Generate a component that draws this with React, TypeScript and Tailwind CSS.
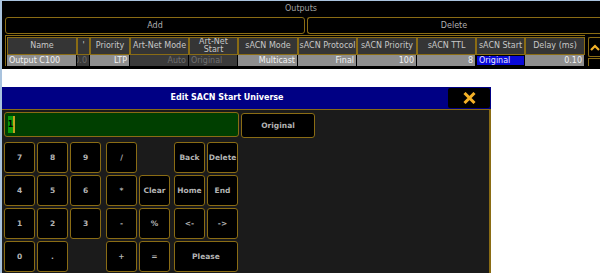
import React from "react";

const GOLD = "border-[#8a6c14]";

const cols = [
  { h: "Name", w: 70, v: "Output C100", align: "left", bg: "bg-[#8e8e8e]", tc: "text-[#f2f2f2]" },
  { h: "-", w: 13, v: "0.0", align: "right", bg: "bg-[#3a3a3a]", tc: "text-[#6a6a6a]" },
  { h: "Priority", w: 40, v: "LTP", align: "right", bg: "bg-[#8e8e8e]", tc: "text-[#f2f2f2]" },
  { h: "Art-Net Mode", w: 59, v: "Auto", align: "right", bg: "bg-[#3a3a3a]", tc: "text-[#707070]" },
  { h: "Art-Net Start", w: 49, v: "Original", align: "left", bg: "bg-[#3a3a3a]", tc: "text-[#707070]", two: true },
  { h: "sACN Mode", w: 60, v: "Multicast", align: "right", bg: "bg-[#8e8e8e]", tc: "text-[#f2f2f2]" },
  { h: "sACN Protocol", w: 59, v: "Final", align: "right", bg: "bg-[#8e8e8e]", tc: "text-[#f2f2f2]" },
  { h: "sACN Priority", w: 60, v: "100", align: "right", bg: "bg-[#8e8e8e]", tc: "text-[#f2f2f2]" },
  { h: "sACN TTL", w: 59, v: "8", align: "right", bg: "bg-[#8e8e8e]", tc: "text-[#f2f2f2]" },
  { h: "sACN Start", w: 49, v: "Original", align: "left", bg: "bg-[#1010e8]", tc: "text-[#e8e8ff]", sel: true },
  { h: "Delay (ms)", w: 60, v: "0.10", align: "right", bg: "bg-[#8e8e8e]", tc: "text-[#f2f2f2]" },
];

function Key({ label, w = 31 }: { label?: string; w?: number }) {
  if (label === undefined) return <div style={{ width: w }} className="h-[31px] shrink-0" />;
  return (
    <div
      style={{ width: w }}
      className={`h-[31px] shrink-0 rounded-[3px] border ${GOLD} bg-black flex items-center justify-center text-[7.5px] font-bold text-[#b4b4b4]`}
    >
      {label}
    </div>
  );
}

function KeyRow({ a, b }: { a: (string | undefined)[]; b: [string | undefined, string | undefined, number?] | (string | undefined)[] }) {
  return (
    <div className="flex h-[31px]">
      <div className="flex gap-[2px]">
        <Key label={a[0]} />
        <Key label={a[1]} />
        <Key label={a[2]} />
      </div>
      <div className="flex gap-[2px] ml-[5px]">
        <Key label={a[3]} />
        <Key label={a[4]} />
      </div>
      <div className="flex gap-[2px] ml-[4px]">
        {b.length === 1 ? <Key label={b[0] as string} w={64} /> : (
          <>
            <Key label={b[0] as string | undefined} />
            <Key label={b[1] as string | undefined} />
          </>
        )}
      </div>
    </div>
  );
}

export default function App() {
  return (
    <div
      className="w-[600px] h-[273px] bg-white border-l-2 border-[#a9c3de] overflow-hidden flex flex-col"
      style={{ fontFamily: '"DejaVu Sans", Verdana, sans-serif' }}
    >
      {/* Top outputs panel */}
      <div className="h-[69px] bg-black border-t border-[#a9c3de] flex flex-col shrink-0">
        <div className="h-[16px] flex items-center justify-center text-[8px] text-[#a0a0a0]">Outputs</div>
        <div className="flex gap-[2px] pl-[3px] h-[17px]">
          <div className={`w-[300px] rounded-[3px] border ${GOLD} flex items-center justify-center text-[8px] text-[#b0b0b0]`}>Add</div>
          <div className={`flex-1 rounded-l-[3px] border border-r-0 ${GOLD} flex items-center justify-center text-[8px] text-[#b0b0b0]`}>Delete</div>
        </div>
        <div className="flex mt-[1px] pl-[3px]">
          <div className={`border-t border-l ${GOLD} pt-[1px] pl-[1px]`}>
            <div className="flex">
              {cols.map((c, i) => (
                <div
                  key={i}
                  style={{ width: c.w }}
                  className={`h-[18px] shrink-0 border ${GOLD} bg-[#353535] flex items-center justify-center text-center text-[8px] leading-[8px] text-[#c8c8c8] overflow-hidden whitespace-nowrap`}
                >
                  {c.two ? (
                    <span>
                      Art-Net
                      <br />
                      Start
                    </span>
                  ) : c.h === "-" ? (
                    <span className="text-[#d0d0d0]">'</span>
                  ) : (
                    c.h
                  )}
                </div>
              ))}
            </div>
            <div className="flex">
              {cols.map((c, i) => (
                <div
                  key={i}
                  style={{ width: c.w }}
                  className={`h-[11px] shrink-0 border-r border-black ${c.sel ? "bg-[#0a0ad8] border border-[#e8e8e8]" : c.bg} ${c.tc} flex items-center ${c.align === "left" ? "justify-start pl-[2px]" : "justify-end pr-[2px]"} text-[8px] leading-[8px] overflow-hidden whitespace-nowrap`}
                >
                  {c.v}
                </div>
              ))}
            </div>
          </div>
          <div className="ml-[3px] flex-1 flex flex-col mt-[2px]">
            <div className={`h-[20px] border border-r-0 ${GOLD} rounded-l-[2px] bg-black flex items-center justify-center`}>
              <svg width="10" height="7" viewBox="0 0 10 7">
                <path d="M1 6 L5 2 L9 6" fill="none" stroke="#f2b22a" strokeWidth="2.2" />
              </svg>
            </div>
            <div className={`flex-1 border border-r-0 border-b-0 ${GOLD} bg-black mt-[1px]`} />
          </div>
        </div>
      </div>

      <div className="h-[18px] shrink-0" />

      {/* Dialog */}
      <div className="w-[489px] flex-1 flex flex-col">
        <div className="h-[22px] bg-[#000084] flex shrink-0">
          <div className="flex-1 flex items-center justify-center text-[8px] font-bold text-white pl-[4px]">
            Edit SACN Start Universe
          </div>
          <div className="w-[42px] h-[20px] mt-[1px] mr-[1px] bg-black rounded-[2px] flex items-center justify-center">
            <svg width="13" height="12" viewBox="0 0 13 12">
              <path d="M1.5 1 L11.5 11 M11.5 1 L1.5 11" stroke="#f4b127" strokeWidth="3" strokeLinecap="butt" />
            </svg>
          </div>
        </div>
        <div className={`flex-1 bg-[#1b1b1b] border-t border-r-2 ${GOLD} pl-[2px] pt-[2px] flex flex-col gap-[2px]`}>
          <div className="flex items-start h-[28px]">
            <div className={`w-[235px] h-[25px] rounded-[3px] border ${GOLD} bg-[#003f00] flex items-center pl-[3px]`}>
              <div className="w-[7px] h-[17px] bg-[#0a9a0a] border-r-2 border-[#c6a21e] flex items-center justify-center text-[8px] font-bold text-black">
                1
              </div>
            </div>
            <div className={`ml-[2px] mt-[1px] w-[74px] h-[25px] rounded-[3px] border ${GOLD} bg-black flex items-center justify-center text-[7.5px] font-bold text-[#b4b4b4]`}>
              Original
            </div>
          </div>
          <KeyRow a={["7", "8", "9", "/", undefined]} b={["Back", "Delete"]} />
          <KeyRow a={["4", "5", "6", "*", "Clear"]} b={["Home", "End"]} />
          <KeyRow a={["1", "2", "3", "-", "%"]} b={["<-", "->"]} />
          <KeyRow a={["0", ".", undefined, "+", "="]} b={["Please"]} />
        </div>
      </div>
    </div>
  );
}
